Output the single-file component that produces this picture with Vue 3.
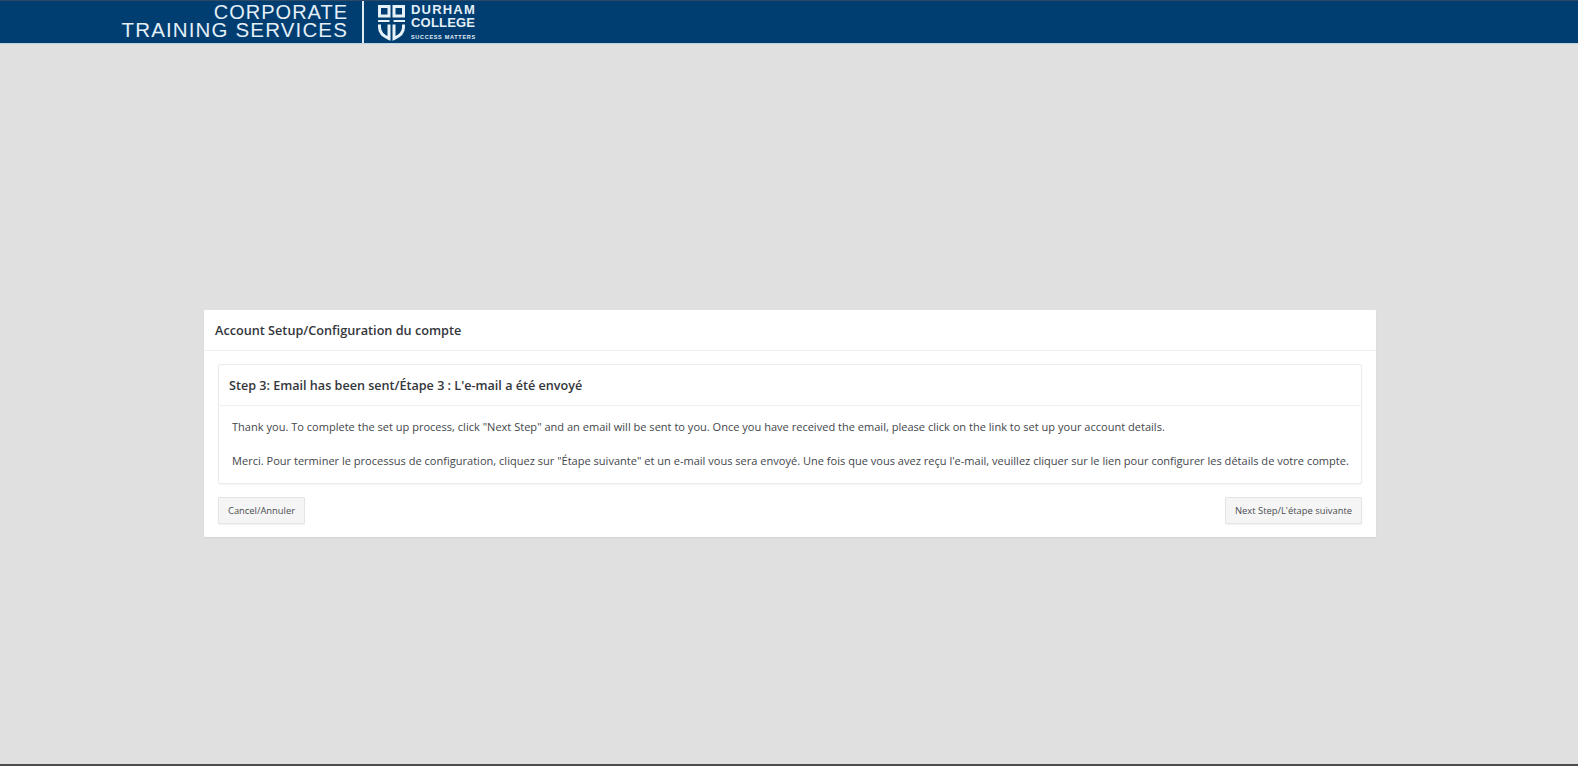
<template>
  <div class="page">
    <header class="topbar">
      <div class="brand">
        <div class="brand-cts">
          <span class="cts-top">CORPORATE</span>
          <span>TRAINING SERVICES</span>
        </div>
        <div class="brand-rule"></div>
        <svg class="crest" width="27" height="36" viewBox="0 0 27 36" fill="none" stroke="#e6f1f8" stroke-width="3">
          <rect x="1.500" y="1.500" width="9.500" height="9.500" />
          <rect x="16" y="1.500" width="9.500" height="9.500" />
          <path d="M0 16h11.500M15.500 16H27" stroke-width="2" />
          <path d="M1.500 19.500v3c0 5.500 3.500 8.500 9.500 11v-14" />
          <path d="M25.500 19.500v3c0 5.500-3.500 8.500-9.500 11v-14" />
        </svg>
        <div class="brand-dc">
          <span class="dc-name dc-durham">DURHAM</span>
          <span class="dc-name dc-college">COLLEGE</span>
          <span class="dc-tag">SUCCESS MATTERS</span>
        </div>
      </div>
    </header>

    <main class="content">
      <section class="card">
        <h1 class="card-title">Account Setup/Configuration du compte</h1>
        <div class="card-body">
          <div class="step">
            <h2 class="step-title">{{ step.title }}</h2>
            <div class="step-text">
              <p v-for="p in step.paragraphs" :key="p">{{ p }}</p>
            </div>
          </div>
          <div class="actions">
            <button type="button" class="btn">Cancel/Annuler</button>
            <button type="button" class="btn">Next Step/L'étape suivante</button>
          </div>
        </div>
      </section>
    </main>

    <div class="bottom-line"></div>
  </div>
</template>

<script setup>
const step = {
  title: 'Step 3: Email has been sent/Étape 3 : L\'e-mail a été envoyé',
  paragraphs: [
    'Thank you. To complete the set up process, click "Next Step" and an email will be sent to you. Once you have received the email, please click on the link to set up your account details.',
    'Merci. Pour terminer le processus de configuration, cliquez sur "Étape suivante" et un e-mail vous sera envoyé. Une fois que vous avez reçu l\'e-mail, veuillez cliquer sur le lien pour configurer les détails de votre compte.',
  ],
}
</script>

<style>
html,
body {
  margin: 0;
  background: #e0e0e0;
}
</style>

<style scoped>
.page {
  display: flex;
  flex-direction: column;
  height: 766px;
  overflow: hidden;
  background: #e0e0e0;
  font-family: "Open Sans", "Noto Sans", sans-serif;
  color: #3a3d42;
}

.topbar {
  flex: none;
  height: 42px;
  border-top: 1px solid #2c4a68;
  border-bottom: 1px solid #bcd3e6;
  background: #003e72;
  box-sizing: content-box;
}
.brand {
  display: flex;
  align-items: flex-start;
  padding-left: 122px;
  height: 42px;
}
.brand-cts {
  display: flex;
  flex-direction: column;
  align-items: flex-end;
  width: 226px;
  font-family: "Liberation Sans", Arial, sans-serif;
  font-size: 20.500px;
  line-height: 18px;
  letter-spacing: 1.150px;
  color: #e4eff7;
  white-space: nowrap;
  margin-top: 2px;
}
.cts-top {
  font-size: 20px;
  letter-spacing: 1px;
}
.brand-rule {
  width: 2px;
  height: 42px;
  margin: 0 14px 0 14px;
  background: #dfeaf3;
}
.crest {
  margin-top: 4px;
}
.brand-dc {
  display: flex;
  flex-direction: column;
  margin: 3px 0 0 6px;
  font-family: "Liberation Sans", Arial, sans-serif;
  font-weight: 700;
  color: #e4eff7;
}
.dc-name {
  font-size: 13px;
  line-height: 12.500px;
}
.dc-durham {
  letter-spacing: 1.200px;
}
.dc-college {
  letter-spacing: 0.200px;
}
.dc-tag {
  margin-top: 5px;
  font-size: 5.500px;
  line-height: 6px;
  letter-spacing: 0.700px;
  white-space: nowrap;
}

.content {
  flex: 1;
  padding: 266px 0 0 204px;
}
.card {
  width: 1172px;
  height: 227px;
  box-sizing: border-box;
  background: #fff;
  box-shadow: 0 1px 2px rgba(0, 0, 0, 0.06);
  border-radius: 1px;
}
.card-title {
  margin: 0;
  padding: 0 11px;
  height: 41px;
  line-height: 41px;
  box-sizing: border-box;
  border-bottom: 1px solid #f0f0f0;
  font-size: 12.680px;
  font-weight: 600;
  color: #33363b;
}
.card-body {
  padding: 13px 14px 0;
}
.step {
  height: 120px;
  box-sizing: border-box;
  border: 1px solid #ebebeb;
  box-shadow: 0 1px 1px rgba(0, 0, 0, 0.04);
  border-radius: 2px;
}
.step-title {
  margin: 0;
  padding: 0 10px;
  height: 41px;
  line-height: 41px;
  box-sizing: border-box;
  border-bottom: 1px solid #f0f0f0;
  font-size: 12.600px;
  font-weight: 600;
  color: #33363b;
}
.step-text {
  padding: 11px 13px 0;
  font-size: 11.050px;
  line-height: 20px;
  color: #44474c;
}
.step-text p {
  margin: 0 0 13.500px;
  white-space: nowrap;
}
.actions {
  display: flex;
  justify-content: space-between;
  margin-top: 13px;
}
.btn {
  height: 27px;
  padding: 0 9px;
  border: 1px solid #e4e4e4;
  border-radius: 1px;
  background: #f5f5f5;
  box-shadow: 0 1px 1px rgba(0, 0, 0, 0.05);
  font-family: inherit;
  font-size: 9.400px;
  color: #4a4d52;
}

.bottom-line {
  flex: none;
  height: 2px;
  background: #4a4c50;
}
</style>
